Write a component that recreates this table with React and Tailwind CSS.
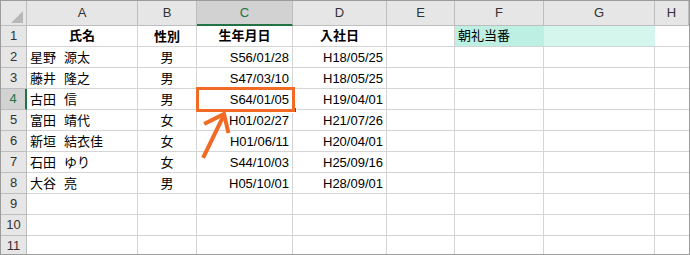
import React from "react";

const cols = ["A", "B", "C", "D", "E", "F", "G", "H"];

const rows = [
  { name: null, gender: "性別", birth: "生年月日", join: "入社日", head: true },
  { name: ["星野", "源太"], gender: "男", birth: "S56/01/28", join: "H18/05/25" },
  { name: ["藤井", "隆之"], gender: "男", birth: "S47/03/10", join: "H18/05/25" },
  { name: ["古田", "信"], gender: "男", birth: "S64/01/05", join: "H19/04/01" },
  { name: ["富田", "靖代"], gender: "女", birth: "H01/02/27", join: "H21/07/26" },
  { name: ["新垣", "結衣佳"], gender: "女", birth: "H01/06/11", join: "H20/04/01" },
  { name: ["石田", "ゆり"], gender: "女", birth: "S44/10/03", join: "H25/09/16" },
  { name: ["大谷", "亮"], gender: "男", birth: "H05/10/01", join: "H28/09/01" },
  {},
  {},
  {},
];

const cell = "h-[21px] border-r border-b border-[#d4d4d4] flex items-center text-[13px] text-black";

const App = () => {
  return (
    <div
      className="relative w-[690px] h-[255px] overflow-hidden bg-white border border-[#9c9c9c]"
      style={{ fontFamily: '"Liberation Sans", "Noto Sans CJK JP", sans-serif' }}
    >
      <div className="grid grid-cols-[26px_111px_59px_96px_94px_68px_89px_111px_1fr]">
        {/* Corner */}
        <div className="h-[25px] bg-[#e6e6e6] border-r border-b border-[#bdbdbd] relative">
          <svg className="absolute right-[3px] bottom-[2px]" width="12" height="12" viewBox="0 0 12 12">
            <polygon points="12,0 12,12 0,12" fill="#b8b8b8" />
          </svg>
        </div>

        {/* Column headers */}
        {cols.map((c) =>
          c === "C" ? (
            <div
              key={c}
              className="h-[25px] bg-[#d2d2d2] border-r border-[#bdbdbd] border-b-2 border-b-[#217346] flex items-center justify-center text-[13px] text-[#217346]"
            >
              {c}
            </div>
          ) : (
            <div
              key={c}
              className="h-[25px] bg-[#e6e6e6] border-r border-b border-[#bdbdbd] flex items-center justify-center text-[13px] text-[#333]"
            >
              {c}
            </div>
          )
        )}

        {/* Rows */}
        {rows.map((r, i) => (
          <React.Fragment key={i}>
            {i === 3 ? (
              <div className="h-[21px] bg-[#d2d2d2] border-b border-[#bdbdbd] border-r-2 border-r-[#217346] flex items-center justify-center text-[13px] text-[#217346]">
                {i + 1}
              </div>
            ) : (
              <div className="h-[21px] bg-[#e6e6e6] border-r border-b border-[#bdbdbd] flex items-center justify-center text-[13px] text-[#333]">
                {i + 1}
              </div>
            )}

            {/* A */}
            {r.head ? (
              <div className={`${cell} justify-center font-bold`}>氏名</div>
            ) : (
              <div className={`${cell} pl-[3px] pt-[1px]`}>
                {r.name && (
                  <>
                    <span>{r.name[0]}</span>
                    <span className="ml-[8px]">{r.name[1]}</span>
                  </>
                )}
              </div>
            )}

            {/* B */}
            <div className={`${cell} justify-center pt-[1px] ${r.head ? "font-bold" : ""}`}>{r.gender}</div>

            {/* C */}
            {r.head ? (
              <div className={`${cell} justify-center font-bold`}>{r.birth}</div>
            ) : (
              <div className={`${cell} justify-end pr-[3px] pt-[1px]`}>{r.birth}</div>
            )}

            {/* D */}
            {r.head ? (
              <div className={`${cell} justify-center font-bold`}>{r.join}</div>
            ) : (
              <div className={`${cell} justify-end pr-[3px] pt-[1px]`}>{r.join}</div>
            )}

            {/* E */}
            <div className={cell}></div>

            {/* F, G */}
            {i === 0 ? (
              <>
                <div className="h-[21px] bg-[#bdf0e3] border-b border-[#d4d4d4] flex items-center pl-[3px] text-[13px] text-black">
                  朝礼当番
                </div>
                <div className="h-[21px] bg-[#d5f6ec] border-b border-[#d4d4d4]"></div>
              </>
            ) : (
              <>
                <div className={cell}></div>
                <div className={cell}></div>
              </>
            )}

            {/* H */}
            <div className="h-[21px] border-b border-[#d4d4d4]"></div>
          </React.Fragment>
        ))}
      </div>

      {/* fill handle */}
      <div className="absolute left-[290px] top-[106px] w-[6px] h-[6px] bg-[#217346] border border-white"></div>

      {/* highlight box */}
      <div className="absolute left-[195px] top-[86px] w-[99px] h-[25px] border-[3px] border-[#f26b26]"></div>

      {/* arrow */}
      <svg className="absolute left-0 top-0" width="690" height="255" viewBox="0 0 690 255">
        <g stroke="#f26b26" strokeWidth="4" fill="none" strokeLinecap="square" strokeLinejoin="miter">
          <line x1="203" y1="155" x2="222" y2="116" />
          <polyline points="205,122 223,113 227,130" />
        </g>
      </svg>
    </div>
  );
};

export default App;
